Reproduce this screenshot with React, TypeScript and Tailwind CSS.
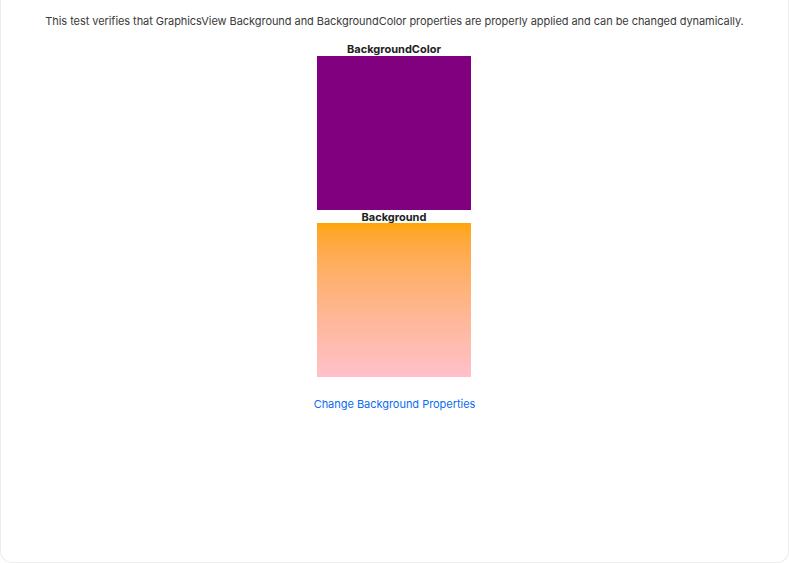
export default function App() {
  return (
    <div className="h-[563px] w-[789px] overflow-hidden bg-white">
      <div
        className="flex h-[563px] flex-col items-center rounded-b-[12px] border-x border-b border-[#ececec] pt-[14px] text-[#333]"
        style={{ fontFamily: "Inter, 'Noto Sans', sans-serif" }}
      >
        <p className="text-[11px] leading-[14px] tracking-[-0.06px] text-[#3a3a3a]">
          This test verifies that GraphicsView Background and BackgroundColor properties are properly applied and can be changed dynamically.
        </p>
        <div className="mt-[15px] flex flex-col items-center pr-px">
          <h3 className="text-[11px] font-bold leading-[13px] text-[#222]">BackgroundColor</h3>
          <div className="h-[154px] w-[154px] bg-[#800080]" />
          <h3 className="mt-px text-[11px] font-bold leading-[12px] text-[#222]">Background</h3>
          <div className="h-[154px] w-[154px] bg-gradient-to-b from-[#ffa500] to-[#ffc0cb]" />
        </div>
        <button type="button" className="mt-[20px] text-[11px] leading-[14px] tracking-[-0.03px] text-[#0a6cf0]">
          Change Background Properties
        </button>
      </div>
    </div>
  );
}
